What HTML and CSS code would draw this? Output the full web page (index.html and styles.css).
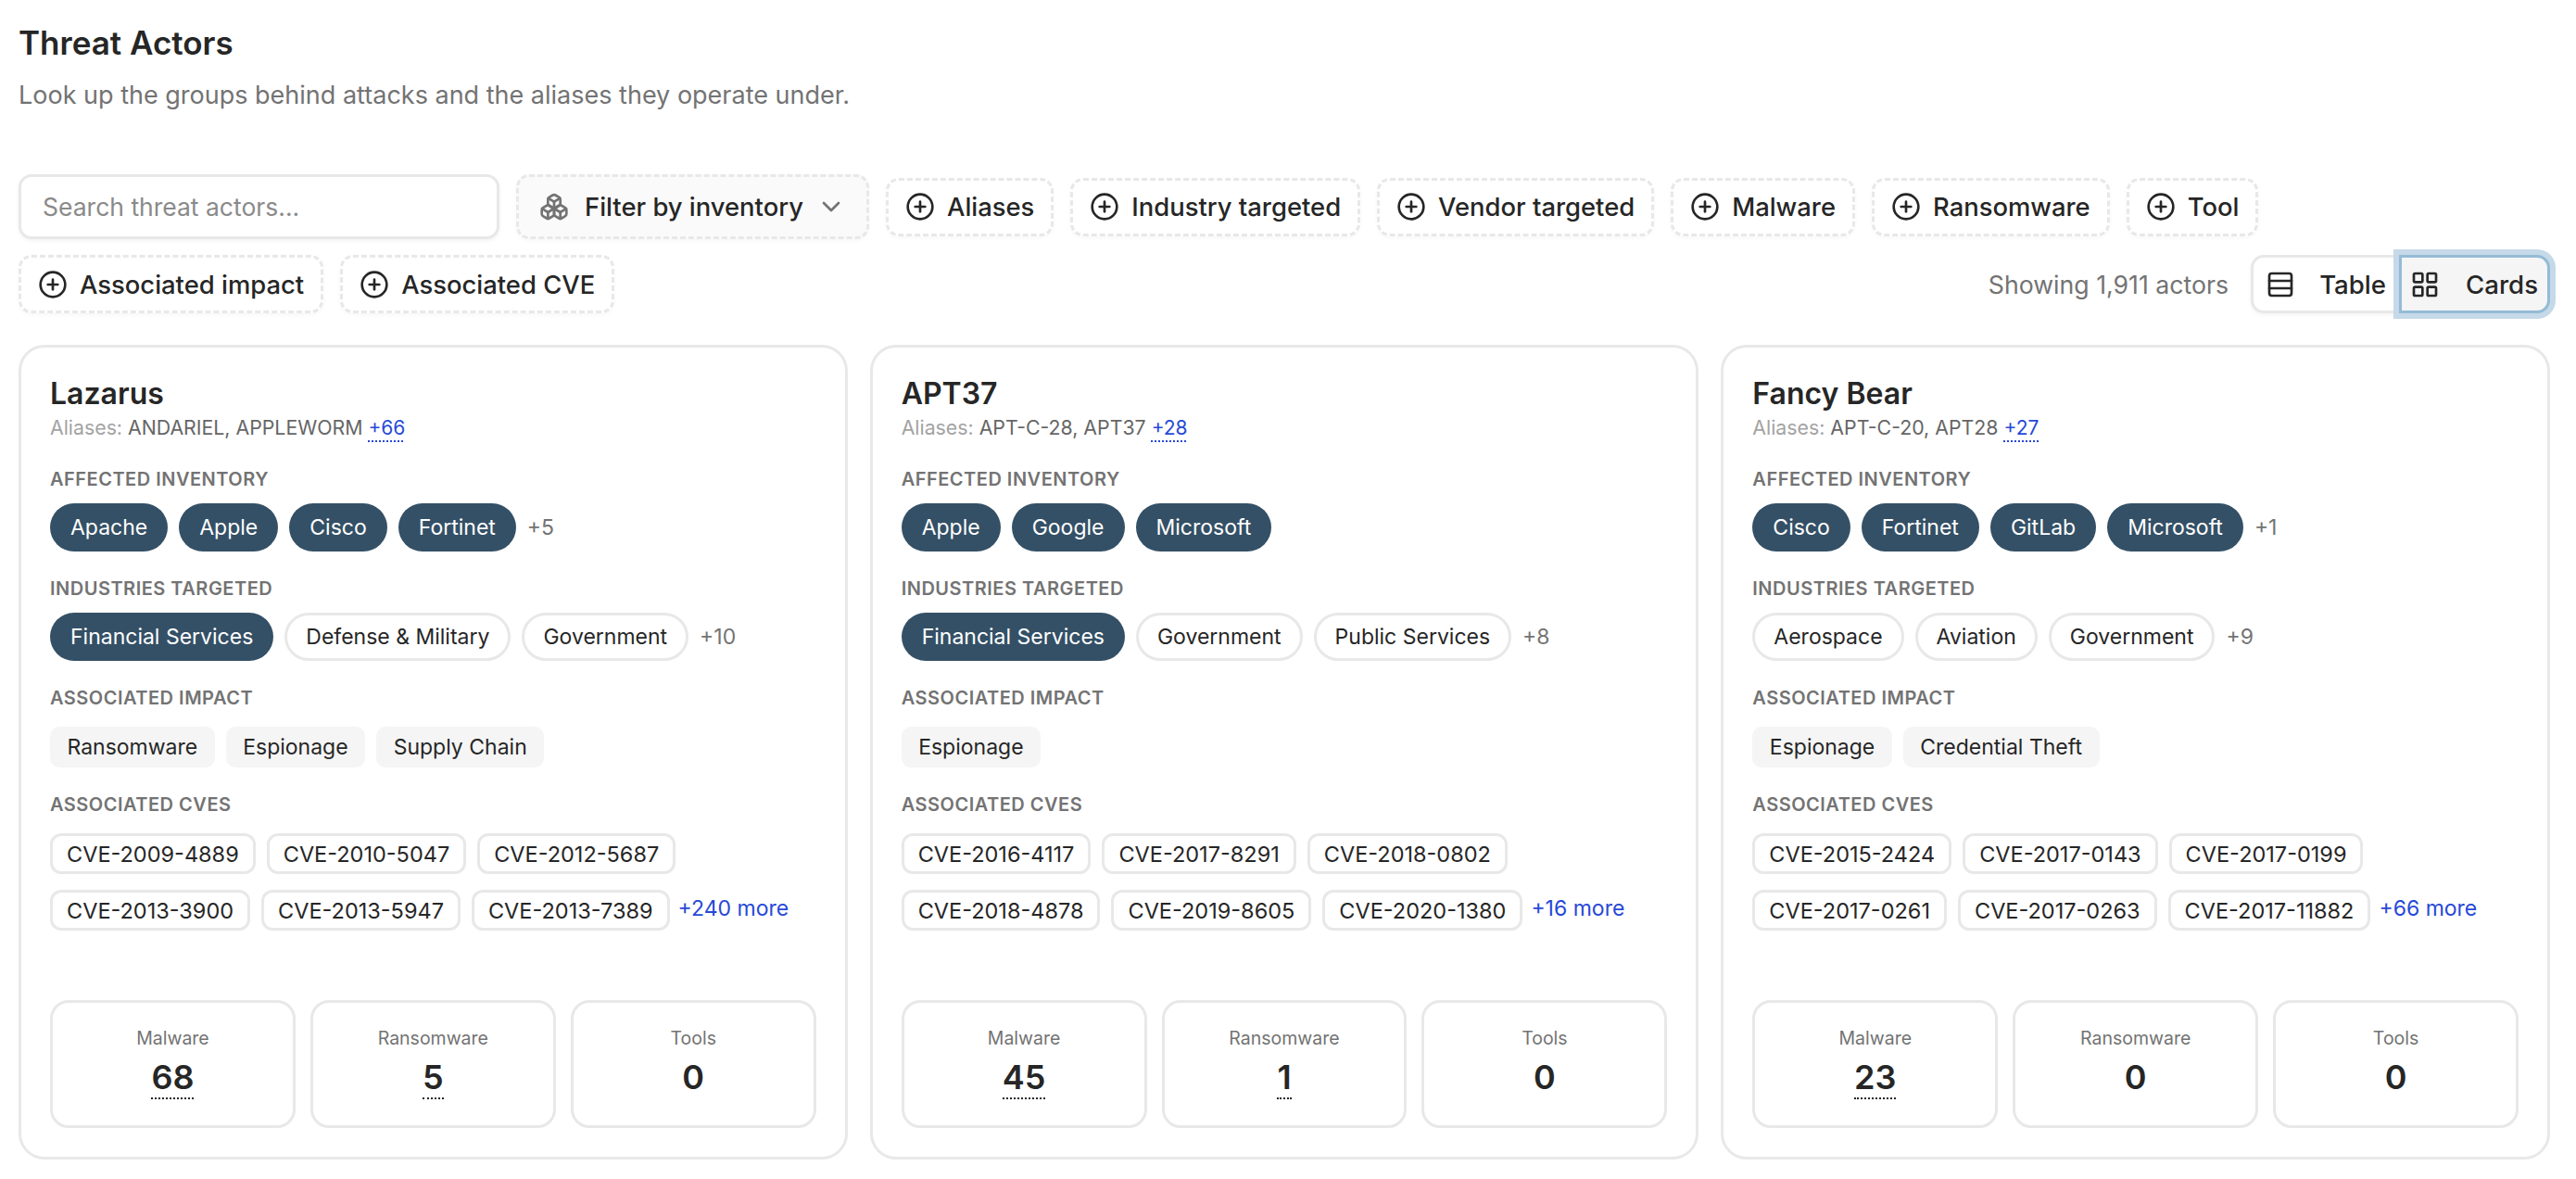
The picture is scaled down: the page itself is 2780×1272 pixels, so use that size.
FILE: index.html
```html
<!doctype html>
<html lang="en">
<head>
    <meta charset="UTF-8">
    <title>Threat Actors</title>
    <link rel="stylesheet" href="styles.css">
</head>
<body>

<svg class="sprite" aria-hidden="true">
    <symbol id="i-plus" viewBox="0 0 24 24"><circle cx="12" cy="12" r="10"/><path d="M8 12h8"/><path d="M12 8v8"/></symbol>
    <symbol id="i-chevron" viewBox="0 0 24 24"><path d="m6 9 6 6 6-6"/></symbol>
    <symbol id="i-rows" viewBox="0 0 24 24"><rect x="3" y="3" width="18" height="18" rx="2"/><path d="M21 9H3"/><path d="M21 15H3"/></symbol>
    <symbol id="i-grid" viewBox="0 0 24 24"><rect x="3" y="3" width="7" height="7" rx="1"/><rect x="14" y="3" width="7" height="7" rx="1"/><rect x="14" y="14" width="7" height="7" rx="1"/><rect x="3" y="14" width="7" height="7" rx="1"/></symbol>
    <symbol id="i-boxes" viewBox="0 0 24 24">
        <path d="M2.97 12.92A2 2 0 0 0 2 14.63v3.24a2 2 0 0 0 .97 1.71l3 1.8a2 2 0 0 0 2.06 0L12 19v-5.5l-5-3-4.03 2.42Z"/>
        <path d="m7 16.5-4.74-2.85"/><path d="m7 16.5 5-3"/><path d="M7 16.5v5.17"/>
        <path d="M12 13.5V19l3.97 2.38a2 2 0 0 0 2.06 0l3-1.8a2 2 0 0 0 .97-1.71v-3.24a2 2 0 0 0-.97-1.71L17 10.5l-5 3Z"/>
        <path d="m17 16.5-5-3"/><path d="m17 16.5 4.74-2.85"/><path d="M17 16.5v5.17"/>
        <path d="M7.97 4.42A2 2 0 0 0 7 6.13v4.37l5 3 5-3V6.13a2 2 0 0 0-.97-1.71l-3-1.8a2 2 0 0 0-2.06 0l-3 1.8Z"/>
        <path d="M12 8 7.26 5.15"/><path d="m12 8 4.74-2.85"/><path d="M12 13.5V8"/>
    </symbol>
</svg>

<main class="page">
    <h1 class="title">Threat Actors</h1>
    <p class="subtitle">Look up the groups behind attacks and the aliases they operate under.</p>

    <div class="toolbar">
        <input class="search" type="text" placeholder="Search threat actors...">
        <button class="chip chip-filter">
            <svg class="icon icon-muted"><use href="#i-boxes"/></svg>
            <span>Filter by inventory</span>
            <svg class="icon icon-muted chevron"><use href="#i-chevron"/></svg>
        </button>
        <button class="chip"><svg class="icon"><use href="#i-plus"/></svg>Aliases</button>
        <button class="chip"><svg class="icon"><use href="#i-plus"/></svg>Industry targeted</button>
        <button class="chip"><svg class="icon"><use href="#i-plus"/></svg>Vendor targeted</button>
        <button class="chip"><svg class="icon"><use href="#i-plus"/></svg>Malware</button>
        <button class="chip"><svg class="icon"><use href="#i-plus"/></svg>Ransomware</button>
        <button class="chip"><svg class="icon"><use href="#i-plus"/></svg>Tool</button>
        <button class="chip"><svg class="icon"><use href="#i-plus"/></svg>Associated impact</button>
        <button class="chip"><svg class="icon"><use href="#i-plus"/></svg>Associated CVE</button>

        <div class="view-group">
            <span class="count">Showing 1,911 actors</span>
            <div class="toggle">
                <button class="toggle-btn"><svg class="icon"><use href="#i-rows"/></svg>Table</button>
                <button class="toggle-btn active"><svg class="icon"><use href="#i-grid"/></svg>Cards</button>
            </div>
        </div>
    </div>

    <div class="cards">
        <article class="card">
            <h2 class="name">Lazarus</h2>
            <p class="aliases"><span class="aliases-label">Aliases:</span> ANDARIEL, APPLEWORM <a class="more-link">+66</a></p>

            <h3 class="label">AFFECTED INVENTORY</h3>
            <div class="row">
                <span class="pill dark">Apache</span>
                <span class="pill dark">Apple</span>
                <span class="pill dark">Cisco</span>
                <span class="pill dark">Fortinet</span>
                <span class="extra">+5</span>
            </div>

            <h3 class="label">INDUSTRIES TARGETED</h3>
            <div class="row">
                <span class="pill dark">Financial Services</span>
                <span class="pill">Defense &amp; Military</span>
                <span class="pill">Government</span>
                <span class="extra">+10</span>
            </div>

            <h3 class="label">ASSOCIATED IMPACT</h3>
            <div class="row tags">
                <span class="tag">Ransomware</span>
                <span class="tag">Espionage</span>
                <span class="tag">Supply Chain</span>
            </div>

            <h3 class="label">ASSOCIATED CVES</h3>
            <div class="row cves">
                <span class="cve">CVE-2009-4889</span>
                <span class="cve">CVE-2010-5047</span>
                <span class="cve">CVE-2012-5687</span>
                <span class="cve">CVE-2013-3900</span>
                <span class="cve">CVE-2013-5947</span>
                <span class="cve">CVE-2013-7389</span>
                <a class="cve-more">+240 more</a>
            </div>

            <div class="stats">
                <div class="stat"><div class="stat-label">Malware</div><span class="stat-value linked">68</span></div>
                <div class="stat"><div class="stat-label">Ransomware</div><span class="stat-value linked">5</span></div>
                <div class="stat"><div class="stat-label">Tools</div><span class="stat-value">0</span></div>
            </div>
        </article>

        <article class="card">
            <h2 class="name">APT37</h2>
            <p class="aliases"><span class="aliases-label">Aliases:</span> APT-C-28, APT37 <a class="more-link">+28</a></p>

            <h3 class="label">AFFECTED INVENTORY</h3>
            <div class="row">
                <span class="pill dark">Apple</span>
                <span class="pill dark">Google</span>
                <span class="pill dark">Microsoft</span>
            </div>

            <h3 class="label">INDUSTRIES TARGETED</h3>
            <div class="row">
                <span class="pill dark">Financial Services</span>
                <span class="pill">Government</span>
                <span class="pill">Public Services</span>
                <span class="extra">+8</span>
            </div>

            <h3 class="label">ASSOCIATED IMPACT</h3>
            <div class="row tags">
                <span class="tag">Espionage</span>
            </div>

            <h3 class="label">ASSOCIATED CVES</h3>
            <div class="row cves">
                <span class="cve">CVE-2016-4117</span>
                <span class="cve">CVE-2017-8291</span>
                <span class="cve">CVE-2018-0802</span>
                <span class="cve">CVE-2018-4878</span>
                <span class="cve">CVE-2019-8605</span>
                <span class="cve">CVE-2020-1380</span>
                <a class="cve-more">+16 more</a>
            </div>

            <div class="stats">
                <div class="stat"><div class="stat-label">Malware</div><span class="stat-value linked">45</span></div>
                <div class="stat"><div class="stat-label">Ransomware</div><span class="stat-value linked">1</span></div>
                <div class="stat"><div class="stat-label">Tools</div><span class="stat-value">0</span></div>
            </div>
        </article>

        <article class="card">
            <h2 class="name">Fancy Bear</h2>
            <p class="aliases"><span class="aliases-label">Aliases:</span> APT-C-20, APT28 <a class="more-link">+27</a></p>

            <h3 class="label">AFFECTED INVENTORY</h3>
            <div class="row">
                <span class="pill dark">Cisco</span>
                <span class="pill dark">Fortinet</span>
                <span class="pill dark">GitLab</span>
                <span class="pill dark">Microsoft</span>
                <span class="extra">+1</span>
            </div>

            <h3 class="label">INDUSTRIES TARGETED</h3>
            <div class="row">
                <span class="pill">Aerospace</span>
                <span class="pill">Aviation</span>
                <span class="pill">Government</span>
                <span class="extra">+9</span>
            </div>

            <h3 class="label">ASSOCIATED IMPACT</h3>
            <div class="row tags">
                <span class="tag">Espionage</span>
                <span class="tag">Credential Theft</span>
            </div>

            <h3 class="label">ASSOCIATED CVES</h3>
            <div class="row cves">
                <span class="cve">CVE-2015-2424</span>
                <span class="cve">CVE-2017-0143</span>
                <span class="cve">CVE-2017-0199</span>
                <span class="cve">CVE-2017-0261</span>
                <span class="cve">CVE-2017-0263</span>
                <span class="cve">CVE-2017-11882</span>
                <a class="cve-more">+66 more</a>
            </div>

            <div class="stats">
                <div class="stat"><div class="stat-label">Malware</div><span class="stat-value linked">23</span></div>
                <div class="stat"><div class="stat-label">Ransomware</div><span class="stat-value">0</span></div>
                <div class="stat"><div class="stat-label">Tools</div><span class="stat-value">0</span></div>
            </div>
        </article>
    </div>
</main>

</body>
</html>
```

FILE: styles.css
```css
* {
    box-sizing: border-box;
}

body {
    margin: 0;
    background: #fff;
    color: #262626;
    font-family: Inter, "Noto Sans", sans-serif;
}

.sprite {
    display: none;
}

.page {
    padding: 24px 28px 0 20px;
}

.title {
    margin: 0;
    font-size: 35px;
    line-height: 44px;
    font-weight: 600;
}

.subtitle {
    margin: 17px 0 0;
    font-size: 27px;
    line-height: 36px;
    color: #737373;
}

/* toolbar */
.toolbar {
    display: flex;
    flex-wrap: wrap;
    align-items: center;
    gap: 17px 18px;
    margin-top: 67px;
}

.search {
    width: 519px;
    height: 70px;
    padding: 0 23px;
    border: 3px solid #e8e8e8;
    border-radius: 14px;
    background: #fff;
    box-shadow: 0 2px 4px rgba(0, 0, 0, 0.05);
    font: 26.5px Inter, sans-serif;
    color: #262626;
}

.search::placeholder {
    color: #8a8a8a;
}

.chip {
    display: flex;
    align-items: center;
    gap: 13px;
    height: 63px;
    padding: 0 18px;
    border: 3px dashed #e8e8e8;
    border-radius: 14px;
    background: #fff;
    box-shadow: 0 2px 4px rgba(0, 0, 0, 0.03);
    font: 500 27.4px Inter, sans-serif;
    color: #262626;
}

.chip-filter {
    height: 70px;
    gap: 17px;
    padding: 0 22px;
    background: #fafafa;
}

.chevron {
    margin-left: -3px;
}

.icon {
    flex: none;
    width: 32px;
    height: 32px;
    fill: none;
    stroke: currentColor;
    stroke-width: 2;
    stroke-linecap: round;
    stroke-linejoin: round;
}

.icon-muted {
    color: #737373;
}

.view-group {
    display: flex;
    align-items: center;
    gap: 24px;
    margin-left: auto;
}

.count {
    font-size: 26.7px;
    color: #737373;
}

.toggle {
    display: flex;
    height: 63px;
    border: 3px solid #e8e8e8;
    border-radius: 14px;
    background: #fff;
    box-shadow: 0 2px 4px rgba(0, 0, 0, 0.05);
}

.toggle-btn {
    display: flex;
    align-items: center;
    gap: 26px;
    padding: 0 14px 0 13px;
    border: 0;
    background: none;
    font: 500 27.6px Inter, sans-serif;
    color: #262626;
}

.toggle-btn.active {
    position: relative;
    gap: 28px;
    margin: -3px -3px -3px 0;
    padding: 0 10px 0 9px;
    border: 3px solid #93bbd6;
    border-radius: 0 14px 14px 0;
    background: #f5f5f5;
    box-shadow: 0 0 0 6px #c5d9e8;
}

/* cards */
.cards {
    display: grid;
    grid-template-columns: repeat(3, 1fr);
    gap: 24px;
    margin-top: 34px;
}

.card {
    padding: 31px;
    border: 3px solid #e8e8e8;
    border-radius: 28px;
    background: #fff;
}

.name {
    margin: 0;
    font-size: 32px;
    line-height: 38px;
    font-weight: 600;
}

.aliases {
    margin: 2px 0 4px;
    font-size: 21.3px;
    line-height: 30px;
    color: #666;
}

.aliases-label {
    color: #a3a3a3;
}

.more-link {
    font-size: 21px;
    color: #2748d8;
    text-decoration: underline dotted 2px;
    text-underline-offset: 6px;
}

.label {
    margin: 26px 0 12px;
    font-size: 20px;
    line-height: 28px;
    font-weight: 600;
    letter-spacing: 0.5px;
    color: #737373;
}

.row {
    display: flex;
    flex-wrap: wrap;
    align-items: center;
    gap: 12px;
}

.pill {
    display: flex;
    align-items: center;
    height: 52px;
    padding: 0 20px;
    border: 3px solid #e8e8e8;
    border-radius: 26px;
    background: #fff;
    font-size: 23px;
}

.pill.dark {
    padding: 0 22px;
    border: 0;
    background: #345066;
    color: #fff;
}

.extra {
    font-size: 23px;
    color: #737373;
}

.tags {
    padding-top: 5px;
}

.tag {
    display: flex;
    align-items: center;
    height: 44px;
    padding: 0 18.5px;
    border-radius: 10px;
    background: #f5f5f5;
    font-size: 23px;
}

.cves {
    gap: 17px 12px;
    padding-top: 5px;
}

.cve {
    display: flex;
    align-items: center;
    height: 44px;
    padding: 0 15px;
    border: 3px solid #e8e8e8;
    border-radius: 12px;
    font-size: 23.5px;
}

.cve-more {
    margin: -4px 0 0 -3px;
    font-size: 23px;
    color: #2748d8;
}

.stats {
    display: grid;
    grid-template-columns: repeat(3, 1fr);
    gap: 16px;
    margin-top: 75px;
}

.stat {
    height: 138px;
    padding-top: 23px;
    border: 3px solid #e8e8e8;
    border-radius: 20px;
    text-align: center;
}

.stat-label {
    font-size: 19.5px;
    line-height: 30px;
    color: #737373;
}

.stat-value {
    display: inline-block;
    margin-top: 5px;
    font-size: 36px;
    line-height: 44px;
    font-weight: 600;
}

.stat-value.linked {
    border-bottom: 2px dotted #262626;
}
```
